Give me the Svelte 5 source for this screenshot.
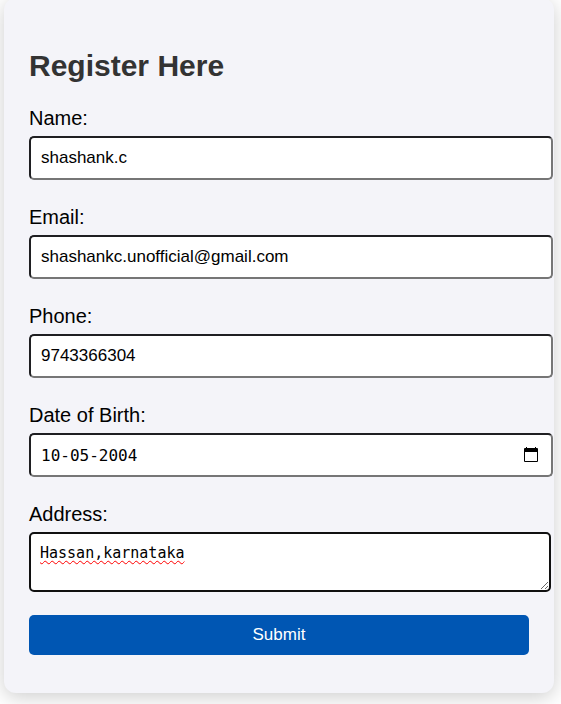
<script>
  let name = $state('shashank.c');
  let email = $state('shashankc.unofficial@gmail.com');
  let phone = $state('9743366304');
  let dob = $state('10-05-2004');
  let address = $state('Hassan,karnataka');
</script>

<main>
  <form class="card" onsubmit={(e) => e.preventDefault()}>
    <h2>Register Here</h2>

    <div class="field">
      <label for="name">Name:</label>
      <input class="box" id="name" type="text" bind:value={name} />
    </div>
    <div class="field">
      <label for="email">Email:</label>
      <input class="box" id="email" type="email" bind:value={email} />
    </div>
    <div class="field">
      <label for="phone">Phone:</label>
      <input class="box" id="phone" type="tel" bind:value={phone} />
    </div>
    <div class="field">
      <label for="dob">Date of Birth:</label>
      <div class="box date">
        <input id="dob" type="text" inputmode="numeric" bind:value={dob} />
        <button class="picker" type="button" aria-label="Show date picker">
          <svg width="14" height="16" viewBox="0 0 14 16" aria-hidden="true">
            <path
              fill="#000"
              fill-rule="evenodd"
              d="M2 0h1v1h8V0h1v1h1a1 1 0 0 1 1 1v12a1 1 0 0 1-1 1H1a1 1 0 0 1-1-1V2a1 1 0 0 1 1-1h1zM1 5v9h12V5z"
            />
          </svg>
        </button>
      </div>
    </div>
    <div class="field">
      <label for="address">Address:</label>
      <textarea id="address" rows="2" spellcheck="false" bind:value={address}></textarea>
    </div>

    <button class="submit" type="submit">Submit</button>
  </form>
</main>

<style>
  :global(body) {
    margin: 0;
    background: #fff;
  }

  main {
    padding: 0 7px 11px 4px;
    overflow: hidden;
  }

  .card {
    display: flex;
    flex-direction: column;
    margin-top: -2px;
    padding: 50px 25px 38px;
    border-radius: 12px;
    background: #f4f4f9;
    box-shadow: 0 4px 20px rgba(0, 0, 0, 0.2);
    font-family: 'Liberation Sans', Arial, sans-serif;
    color: #000;
  }

  h2 {
    margin: 0 0 22px;
    font-size: 30px;
    line-height: 36px;
    color: #333;
  }

  .field {
    display: flex;
    flex-direction: column;
    gap: 6px;
    margin-bottom: 25px;
  }

  label {
    font-size: 20px;
    line-height: 24px;
  }

  .box {
    box-sizing: border-box;
    width: calc(100% + 24px);
    height: 44px;
    padding: 0 10px;
    border: 2px solid;
    border-color: #1f1f22 #767676 #767676 #1f1f22;
    border-radius: 5px;
    background: #fff;
    color: #000;
    font-family: inherit;
    font-size: 17px;
  }

  .date {
    display: flex;
    align-items: center;
    padding-right: 13px;
  }

  .date input {
    flex: 1;
    min-width: 0;
    padding: 0;
    border: 0;
    outline: 0;
    background: none;
    color: #000;
    font-family: 'DejaVu Sans Mono', Consolas, monospace;
    font-size: 16px;
  }

  .picker {
    display: flex;
    padding: 0;
    border: 0;
    background: none;
  }

  textarea {
    box-sizing: border-box;
    width: calc(100% + 22px);
    height: 60px;
    padding: 9px;
    border: 2px solid #101010;
    border-radius: 5px;
    background: #fff;
    color: #000;
    font-family: 'DejaVu Sans Mono', Consolas, monospace;
    font-size: 15px;
    line-height: 20px;
    resize: vertical;
    text-decoration: underline wavy #f00 1px;
    text-decoration-skip-ink: none;
    text-underline-offset: 2px;
  }

  .field:has(textarea) {
    margin-bottom: 23px;
  }

  .submit {
    height: 40px;
    padding: 0;
    border: 0;
    border-radius: 5px;
    background: #0056b3;
    color: #fff;
    font-family: inherit;
    font-size: 17px;
  }
</style>
